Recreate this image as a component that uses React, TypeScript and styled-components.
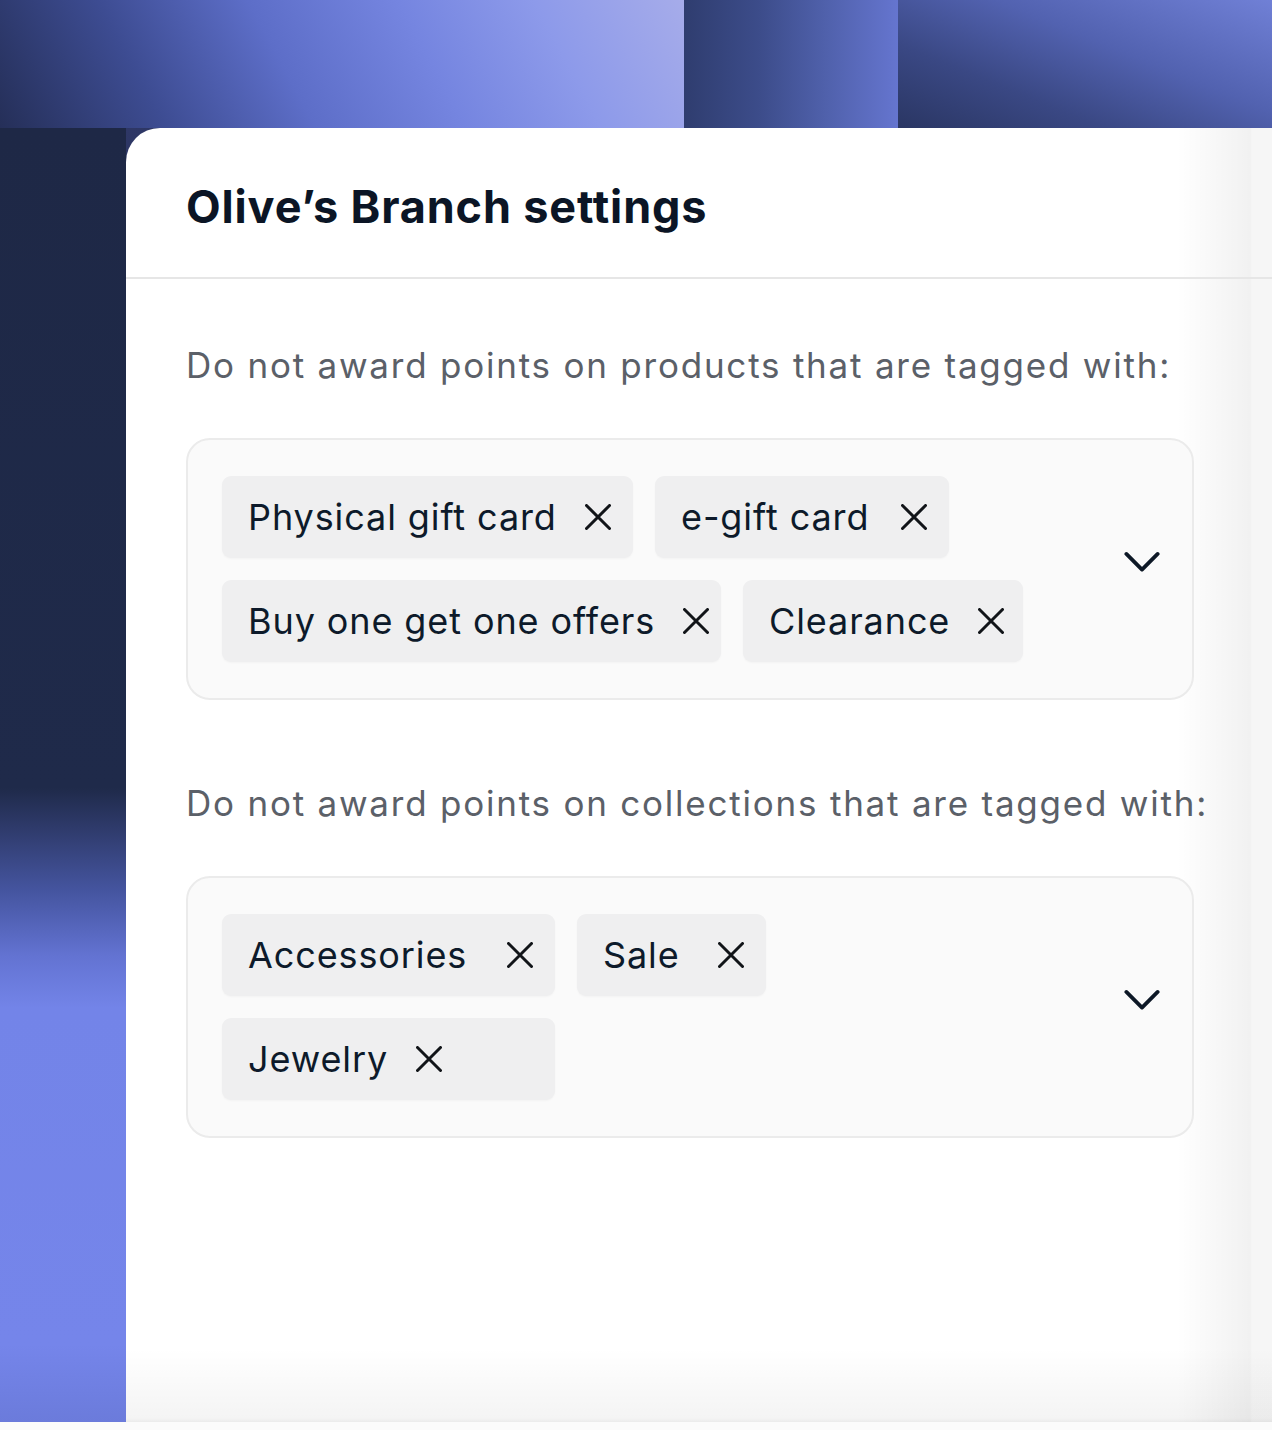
import React from 'react';
import styled, { createGlobalStyle } from 'styled-components';

interface TagData {
  label: string;
  width: number;
  packed?: boolean;
}

interface TileStyle {
  tileWidth: number;
  bg: string;
}

interface ChipStyle {
  chipWidth: number;
  packed?: boolean;
}

const GlobalStyle = createGlobalStyle`
  html, body {
    margin: 0;
    padding: 0;
    background: #ffffff;
  }
  * {
    box-sizing: border-box;
  }
`;

const Page = styled.div`
  width: 1272px;
  height: 1430px;
  overflow: hidden;
  display: grid;
  grid-template-rows: 128px 1294px 8px;
  font-family: Inter, 'Noto Sans', sans-serif;
  background: #fbfbfb;
`;

const TopBand = styled.div`
  display: flex;
`;

const Tile = styled.div<TileStyle>`
  width: ${(props) => props.tileWidth}px;
  flex-shrink: 0;
  background: ${(props) => props.bg};
`;

const Middle = styled.div`
  display: grid;
  grid-template-columns: 126px 1fr;
  background: linear-gradient(to bottom, #2e3766 0, #2a3460 60px, #ffffff 61px);
`;

const SideStrip = styled.div`
  background: linear-gradient(
    to bottom,
    #1e2846 0%,
    #1f2a4a 51%,
    #2e3a6a 54%,
    #4555a0 59%,
    #6373d2 64%,
    #7384e8 68%,
    #7585ea 94%,
    #6b7bdb 100%
  );
`;

const Card = styled.div`
  border-top-left-radius: 34px;
  background:
    linear-gradient(to right, rgba(0, 0, 0, 0) 1050px, rgba(0, 0, 0, 0.055) 1124px, rgba(0, 0, 0, 0.035) 1126px),
    linear-gradient(to bottom, rgba(0, 0, 0, 0) 1220px, rgba(0, 0, 0, 0.045) 1290px, rgba(0, 0, 0, 0.08) 1294px),
    #ffffff;
  display: flex;
  flex-direction: column;
`;

const Header = styled.div`
  height: 151px;
  padding: 0 0 0 60px;
  display: flex;
  align-items: center;
  border-bottom: 2px solid #e6e6e6;
`;

const Title = styled.h1`
  margin: 8px 0 0 0;
  font-size: 45px;
  font-weight: 700;
  letter-spacing: 0.85px;
  color: #0b1525;
  white-space: nowrap;
`;

const Body = styled.div`
  padding: 62px 0 0 60px;
  display: flex;
  flex-direction: column;
`;

const Section = styled.div`
  display: flex;
  flex-direction: column;
  & + & {
    margin-top: 79px;
  }
`;

const Label = styled.p`
  margin: 0 0 49px 0;
  font-size: 35px;
  line-height: 48px;
  letter-spacing: 1.78px;
  color: #5b6068;
  white-space: nowrap;
`;

const SelectBox = styled.div`
  width: 1008px;
  border: 2px solid #ebebeb;
  border-radius: 24px;
  background: #fafafa;
  padding: 36px 32px 36px 34px;
  display: flex;
  align-items: center;
  gap: 34px;
`;

const ChipList = styled.div`
  flex: 1;
  display: flex;
  flex-wrap: wrap;
  gap: 22px 22px;
`;

const Chip = styled.div<ChipStyle>`
  width: ${(props) => props.chipWidth}px;
  height: 82px;
  padding: 0 20px 0 26px;
  border-radius: 9px;
  background: #efeff0;
  box-shadow: 0 1px 2px rgba(0, 0, 0, 0.03);
  display: flex;
  align-items: center;
  justify-content: ${(props) => (props.packed ? 'flex-start' : 'space-between')};
  gap: 26px;
`;

const ChipText = styled.span`
  font-size: 36px;
  letter-spacing: 0.9px;
  color: #0d1a2a;
  white-space: nowrap;
`;

const IconButton = styled.span`
  display: flex;
  align-items: center;
  justify-content: center;
  width: 30px;
  height: 30px;
  flex-shrink: 0;
`;

const Chevron = styled.span`
  display: flex;
  width: 36px;
  flex-shrink: 0;
  margin-top: -14px;
`;

function CloseIcon() {
  return (
    <svg width="26" height="26" viewBox="0 0 26 26" fill="none">
      <path d="M1.5 1.5 24.5 24.5M24.5 1.5 1.5 24.5" stroke="#111418" strokeWidth="3" strokeLinecap="round" />
    </svg>
  );
}

function ChevronIcon() {
  return (
    <svg width="38" height="22" viewBox="0 0 38 22" fill="none">
      <path d="M2.5 2.5 19 19 35.5 2.5" stroke="#0d1826" strokeWidth="4" strokeLinecap="round" strokeLinejoin="round" />
    </svg>
  );
}

const productTags: TagData[] = [
  { label: 'Physical gift card', width: 411 },
  { label: 'e-gift card', width: 294 },
  { label: 'Buy one get one offers', width: 499 },
  { label: 'Clearance', width: 280 },
];

const collectionTags: TagData[] = [
  { label: 'Accessories', width: 333 },
  { label: 'Sale', width: 189 },
  { label: 'Jewelry', width: 333, packed: true },
];

function TagSelect({ label, tags }: { label: string; tags: TagData[] }) {
  return (
    <Section>
      <Label>{label}</Label>
      <SelectBox>
        <ChipList>
          {tags.map((tag) => (
            <Chip key={tag.label} chipWidth={tag.width} packed={tag.packed}>
              <ChipText>{tag.label}</ChipText>
              <IconButton>
                <CloseIcon />
              </IconButton>
            </Chip>
          ))}
        </ChipList>
        <Chevron>
          <ChevronIcon />
        </Chevron>
      </SelectBox>
    </Section>
  );
}

export default function App() {
  return (
    <>
      <GlobalStyle />
      <Page>
        <TopBand>
          <Tile
            tileWidth={684}
            bg="linear-gradient(62deg, #252f58 0%, #3d4c92 22%, #5d6ec8 42%, #7585e0 62%, #8d9aea 80%, #a6acea 100%)"
          />
          <Tile
            tileWidth={214}
            bg="linear-gradient(to right, #2f3d6f 0%, #3c4c8a 35%, #4f60aa 65%, #6575cf 100%)"
          />
          <Tile
            tileWidth={374}
            bg="linear-gradient(22deg, #2a3663 0%, #3a4884 30%, #5262b0 60%, #7080d6 100%)"
          />
        </TopBand>
        <Middle>
          <SideStrip />
          <Card>
            <Header>
              <Title>Olive’s Branch settings</Title>
            </Header>
            <Body>
              <TagSelect label="Do not award points on products that are tagged with:" tags={productTags} />
              <TagSelect label="Do not award points on collections that are tagged with:" tags={collectionTags} />
            </Body>
          </Card>
        </Middle>
        <div />
      </Page>
    </>
  );
}
